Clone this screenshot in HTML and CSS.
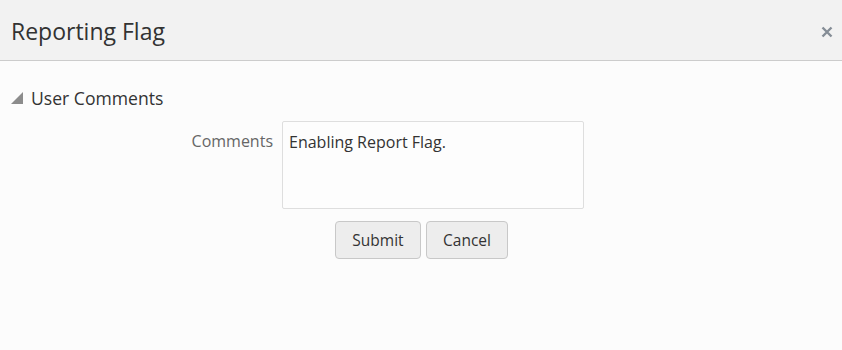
FILE: index.html
```html
<!DOCTYPE html>
<html>
<head>
<meta charset="utf-8">
<link rel="stylesheet" href="styles.css">
</head>
<body>
<div class="dialog">
  <div class="header">
    <h1 class="title">Reporting Flag</h1>
    <span class="close">
      <svg width="12" height="12" viewBox="0 0 12 12"><path d="M1.5 1.5 L10.5 10.5 M10.5 1.5 L1.5 10.5" stroke="#858d96" stroke-width="2.4" stroke-linecap="butt"/></svg>
    </span>
  </div>
  <div class="content">
    <div class="section-head">
      <svg class="tri" width="12" height="12" viewBox="0 0 12 12"><polygon points="0,12 12,12 12,0" fill="#8c8c8c"/></svg>
      <span class="section-title">User Comments</span>
    </div>
    <div class="form-row">
      <label class="label">Comments</label>
      <div class="textarea">Enabling Report Flag.</div>
    </div>
    <div class="buttons">
      <button class="btn btn-submit">Submit</button>
      <button class="btn btn-cancel">Cancel</button>
    </div>
  </div>
</div>
</body>
</html>
```
FILE: styles.css
```css
html, body {
  margin: 0;
  padding: 0;
  background: #fcfcfc;
}
body {
  font-family: "Open Sans", "Noto Sans", sans-serif;
  color: #333333;
  width: 842px;
  height: 350px;
  overflow: hidden;
}
.header {
  height: 61px;
  background: #f2f2f2;
  border-bottom: 1px solid #cccccc;
  display: flex;
  align-items: center;
  justify-content: space-between;
  padding: 0 9px 0 11px;
  box-sizing: border-box;
}
.title {
  margin: 0;
  font-size: 23px;
  font-weight: 400;
  color: #333333;
  position: relative;
  top: 1px;
}
.close {
  display: flex;
  width: 12px;
  height: 12px;
  margin-top: 4px;
}
.content {
  padding: 26px 11px 0 11px;
}
.section-head {
  display: flex;
  align-items: center;
  height: 22px;
}
.tri {
  margin-right: 8px;
  margin-top: 0;
}
.section-title {
  font-size: 17.6px;
  color: #333;
}
.form-row {
  display: flex;
  margin-top: 12px;
  margin-left: 171px;
}
.label {
  width: 91px;
  text-align: right;
  font-size: 16px;
  color: #666666;
  padding-top: 9px;
  padding-right: 9px;
}
.textarea {
  width: 300px;
  height: 86px;
  border: 1px solid #dedede;
  border-radius: 2px;
  background: #fdfdfd;
  box-sizing: content-box;
  padding: 0;
  font-size: 16px;
  color: #333;
  text-indent: 6px;
  line-height: 40px;
}
.buttons {
  display: flex;
  justify-content: center;
  gap: 5px;
  margin-top: 12px;
  margin-left: -11px;
  margin-right: -11px;
  padding-left: 1px;
}
.btn {
  height: 38px;
  border: 1px solid #c8c8c8;
  border-radius: 4px;
  background: #ededed;
  font-family: "Open Sans", "Noto Sans", sans-serif;
  font-size: 15.5px;
  color: #333;
  padding: 0;
}
.btn-submit { width: 86px; }
.btn-cancel { width: 82px; }
```
